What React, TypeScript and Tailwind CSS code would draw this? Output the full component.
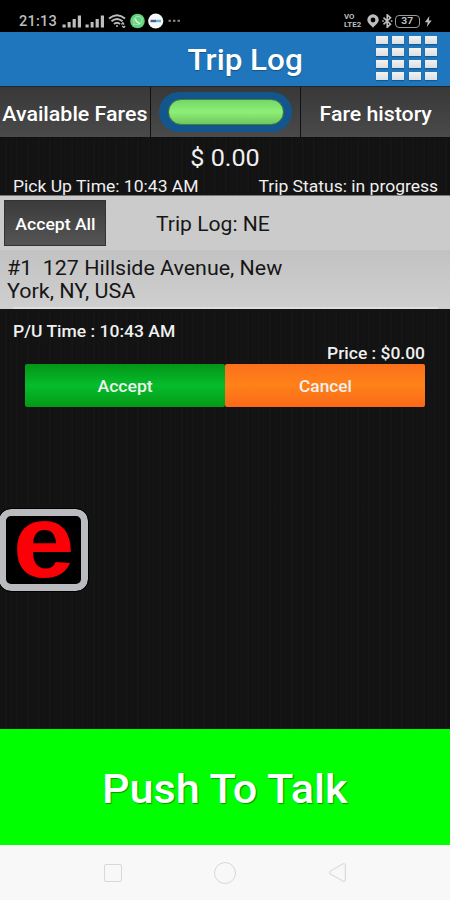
import { Triangle } from 'lucide-react';

const gridDots = Array.from({ length: 16 }, (_, i) => i);

function SignalBars() {
  return (
    <svg width="20" height="13" viewBox="0 0 20 13" fill="#bdbdbd" aria-hidden="true">
      <rect x="0.5" y="9.5" width="3.2" height="3" />
      <rect x="5.6" y="7" width="3" height="5.5" />
      <rect x="10.6" y="4" width="3.2" height="8.5" />
      <rect x="15.8" y="0.5" width="3.2" height="12" />
    </svg>
  );
}

function StatusBar() {
  return (
    <div className="flex h-8 items-center bg-black pt-[10px] text-[#bdbdbd]">
      <span className="ml-[19px] w-[38px] origin-left scale-x-[1.04] text-[14px] leading-none font-medium tracking-[0.2px] whitespace-nowrap">21:13</span>
      <div className="ml-[5px] flex items-center gap-[3px]">
        <SignalBars />
        <SignalBars />
      </div>
      {/* Wi-Fi */}
      <svg className="ml-[3px]" width="19" height="14" viewBox="0 0 19 14" fill="none" stroke="#bdbdbd" strokeWidth="2" aria-hidden="true">
        <path d="M1 4.5Q9 -2 17 4.5" />
        <path d="M3.5 7.3Q9 2.6 14.5 7.3" />
        <path d="M6 10Q9 7.4 12 10" />
        <circle cx="9" cy="12" r="1" fill="#bdbdbd" stroke="none" />
        <path d="M13.5 10.5l1.3-1.6 1.3 1.6M14.3 12l1.4 1.5 1.4-1.5" strokeWidth="1.3" />
      </svg>
      {/* Notification badges */}
      <svg className="ml-[3px]" width="34" height="16" viewBox="0 0 34 16" aria-hidden="true">
        <circle cx="7.5" cy="8" r="7.3" fill="#62d27c" />
        <path d="M3.7 11.9l.6-2.2a4.2 4.2 0 1 1 1.5 1.5z" fill="none" stroke="#a6e8b3" strokeWidth="1" />
        <path d="M5.3 5.5c.5 2.5 2.2 4.4 4.9 5" fill="none" stroke="#d3f5d9" strokeWidth="1.5" />
        <circle cx="25.7" cy="8" r="7.6" fill="#f5f8fa" />
        <path d="M20.5 8h5.500" stroke="#4d5c8c" strokeWidth="2.4" />
        <path d="M26 8h5" stroke="#62b9cd" strokeWidth="2.4" />
      </svg>
      <svg className="ml-[4px]" width="13" height="4" viewBox="0 0 13 4" fill="#8c8c8c" aria-hidden="true">
        <rect x="0.5" y="0.8" width="2.4" height="2" />
        <rect x="5" y="0.8" width="2.4" height="2" />
        <rect x="9.5" y="0.8" width="2.4" height="2" />
      </svg>

      <div className="mr-[17px] ml-auto flex items-center">
        <div className="mr-[3px] w-[19px] origin-left scale-x-[1.12] text-[7px] leading-[8px] font-bold whitespace-nowrap">
          <div>VO</div>
          <div>LTE2</div>
        </div>
        <svg width="14" height="14" viewBox="0 0 14 14" aria-hidden="true">
          <path fillRule="evenodd" fill="#bdbdbd" d="M7 .3a5.7 5.7 0 0 0-5.700 5.700C1.300 9 4.800 11 7 13.800c2.200-2.800 5.700-4.800 5.700-7.800A5.700 5.700 0 0 0 7 .3zM7 3.600a2.400 2.400 0 1 1 0 4.800 2.400 2.400 0 0 1 0-4.800z" />
        </svg>
        <svg className="ml-[2px]" width="11" height="14" viewBox="0 0 11 14" fill="none" stroke="#bdbdbd" strokeWidth="1.6" aria-hidden="true">
          <path d="M1.5 3.7l7 6.500-3.300 3V.8l3.300 3-7 6.500" />
          <path d="M.2 7h1.600M8.800 7h1.600" />
        </svg>
        <div className="ml-[2px] flex h-[13px] w-[25px] items-center justify-center rounded-[4px] border border-[#9a9a9a] text-[9px] leading-none font-bold">
          <span className="scale-x-[1.15]">37</span>
        </div>
        <svg className="ml-[4px]" width="9" height="13" viewBox="0 0 9 13" fill="#bdbdbd" aria-hidden="true">
          <path d="M5.500 1L.8 7.300h2.900L2.800 12l4.900-6.500H4.800z" />
        </svg>
      </div>
    </div>
  );
}

function Header() {
  return (
    <header className="relative flex h-[54px] items-center justify-center bg-[#1f76bc] pt-[4px] pl-[41px]">
      <h1 className="scale-x-[1.065] text-[29.5px] leading-none font-medium whitespace-nowrap text-white [text-shadow:0_1px_1px_rgba(0,0,0,0.3)]">Trip Log</h1>
      <button type="button" aria-label="Menu" className="absolute top-[4px] right-[13px] grid grid-cols-4 gap-x-[4.5px] gap-y-[4px]">
        {gridDots.map((dot) => (
          <span key={dot} className="h-[8px] w-[12px] bg-linear-to-b from-[#f2f2f2] to-[#dadfe4] shadow-[0_1px_1px_rgba(0,0,0,0.25)]" />
        ))}
      </button>
    </header>
  );
}

function Tabs() {
  return (
    <div className="flex h-[52px] gap-px border-t border-[#20262c] bg-[#111] pb-px text-white">
      <button type="button" className="flex w-[150px] items-center justify-center bg-linear-to-b from-[#383838] to-[#4a4a4a] pt-[3px] text-[20px] font-medium whitespace-nowrap">
        <span className="scale-x-[1.07]">Available Fares</span>
      </button>
      <div className="flex w-[149px] items-center justify-center bg-linear-to-b from-[#383838] to-[#4a4a4a]">
        <div className="flex h-[40px] w-[133px] items-center justify-center rounded-full bg-[#13568d]">
          <div className="h-[26px] w-[116px] rounded-full border border-[#3d7f3c] bg-linear-to-b from-[#74d866] via-[#8eef78] to-[#70c75e]" />
        </div>
      </div>
      <button type="button" className="flex flex-1 items-center justify-center bg-linear-to-b from-[#383838] to-[#4a4a4a] pt-[3px] text-[20px] font-medium whitespace-nowrap">
        <span className="scale-x-[1.065]">Fare history</span>
      </button>
    </div>
  );
}

export default function App() {
  return (
    <div className="flex h-[900px] w-[450px] flex-col overflow-hidden bg-[#131313] font-['Roboto',sans-serif]">
      <StatusBar />
      <Header />
      <Tabs />

      <main className="flex h-[591px] flex-col bg-[repeating-linear-gradient(90deg,#131313_0px,#131313_5px,#171717_6px,#111_8px,#151515_11px)] text-[#f0f0f0]">
        <div className="h-[57px]">
          <div className="scale-x-[1.05] pt-[7px] text-center text-[24px] leading-[26px]">$ 0.00</div>
          <div className="flex justify-between pt-[7px] pr-[12px] pl-[13px] text-[16px] leading-[18px] whitespace-nowrap">
            <span className="origin-left scale-x-[1.095]">Pick Up Time: 10:43 AM</span>
            <span className="origin-right scale-x-[1.095]">Trip Status: in progress</span>
          </div>
        </div>

        <div className="flex h-[55px] items-center border-t border-[#777] bg-[#cbcbcb] text-[#161616]">
          <button type="button" className="ml-[4px] h-[46px] w-[102px] border border-[#333] bg-linear-to-b from-[#3b3b3b] to-[#555] pt-[3px] text-[16px] font-medium whitespace-nowrap text-white">
            <span className="inline-block scale-x-[1.1]">Accept All</span>
          </button>
          <span className="ml-[50px] origin-left scale-x-[1.055] pt-[2px] text-[20px]">Trip Log: NE</span>
        </div>
        <div className="h-[59px] bg-linear-to-b from-[#c2c2c2] to-[#cfcfcf] pt-[7px] pl-[7px] text-[20px] leading-[23px] whitespace-pre text-[#161616]">
          <div className="origin-left scale-x-[1.07]">#1  127 Hillside Avenue, New</div>
          <div className="origin-left scale-x-[1.075]">York, NY, USA</div>
          <div className="mt-[4px] mr-[12px] ml-[6px] h-[2px] bg-[#dedede]" />
        </div>

        <div className="mt-[12px] ml-[13px] origin-left scale-x-[1.095] text-[16px] leading-[22px] font-medium">P/U Time : 10:43 AM</div>
        <div className="mr-[25px] origin-right scale-x-[1.09] text-right text-[16px] leading-[22px] font-medium">Price : $0.00</div>
        <div className="mx-[25px] -mt-px flex h-[43px] text-[16px] font-medium">
          <button type="button" className="flex-1 rounded-[2px] bg-linear-to-b from-[#049516] via-[#05bd2b] to-[#049a15] pt-[2px]">
            <span className="inline-block scale-x-[1.1]">Accept</span>
          </button>
          <button type="button" className="flex-1 rounded-[2px] bg-linear-to-b from-[#fb701b] via-[#ff8118] to-[#fa681a] pt-[2px]">
            <span className="inline-block scale-x-[1.08]">Cancel</span>
          </button>
        </div>

        {/* App launcher tile */}
        <div className="mt-[102px] -ml-px flex h-[82px] w-[89px] items-center justify-center rounded-[12px] border-[7px] border-[#b9bbbe] bg-black outline outline-black">
          <span className="-mt-[17px] scale-x-[1.08] font-['Liberation_Sans',sans-serif] text-[103px] leading-[60px] font-bold text-[#fb0007]">e</span>
        </div>
      </main>

      <button type="button" className="h-[116px] bg-[#00ff00] pt-[5px] text-[40px] font-medium text-white [text-shadow:1px_1px_1px_rgba(0,90,0,0.6)]">
        <span className="inline-block scale-x-[1.08]">Push To Talk</span>
      </button>

      <nav className="flex h-[55px] items-center justify-between bg-[#f8f8f8] pr-[102px] pl-[104px]">
        <span className="h-[18px] w-[18px] rounded-[2px] border border-[#d8d8d8]" />
        <span className="h-[22px] w-[22px] rounded-full border border-[#d8d8d8]" />
        <Triangle className="-rotate-90" size={21} strokeWidth={1.4} color="#dcdcdc" />
      </nav>
    </div>
  );
}
